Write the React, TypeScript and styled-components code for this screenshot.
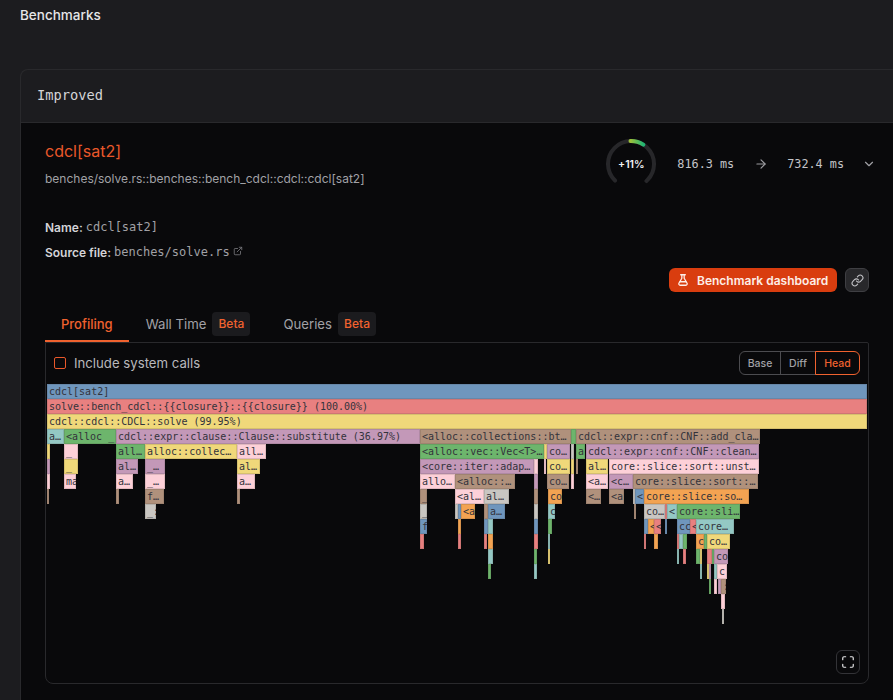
import React from "react";
import styled, { createGlobalStyle } from "styled-components";
import { ArrowRight, ChevronDown, ExternalLink, Link as LinkIcon, Maximize } from "lucide-react";

const GlobalStyle = createGlobalStyle`
  html, body {
    margin: 0;
    height: 700px;
    overflow: hidden;
    background: #1c1c1f;
    font-family: Inter, "Liberation Sans", sans-serif;
  }
  * { box-sizing: border-box; }
`;

const mono = `"DejaVu Sans Mono", "Liberation Mono", monospace`;

const tones = {
  blue: "#6f96bd",
  red: "#e88080",
  yellow: "#f0d87a",
  teal: "#94c8c4",
  green: "#6db56c",
  purple: "#c398b8",
  brown: "#b0917c",
  pink: "#fdd0d8",
  gray: "#c9c6c2",
  orange: "#f3a352",
};

type Tone = keyof typeof tones;
// [left, right, tone, label]
type FrameData = [number, number, Tone, string?];

const flameRows: FrameData[][] = [
  [[47, 867, "blue", "cdcl[sat2]"]],
  [[47, 867, "red", "solve::bench_cdcl::{{closure}}::{{closure}} (100.00%)"]],
  [[47, 867, "yellow", "cdcl::cdcl::CDCL::solve (99.95%)"]],
  [
    [47, 64, "teal", "a…"],
    [64, 116, "green", "<alloc _"],
    [116, 420, "purple", "cdcl::expr::clause::Clause::substitute (36.97%)"],
    [420, 571, "brown", "<alloc::collections::bt…"],
    [571, 576, "green"],
    [576, 760, "brown", "cdcl::expr::cnf::CNF::add_cla…"],
  ],
  [
    [47, 50, "yellow"],
    [64, 78, "pink", "_"],
    [116, 145, "green", "all…"],
    [145, 237, "yellow", "alloc::collec…"],
    [237, 266, "pink", "all…"],
    [420, 544, "green", "<alloc::vec::Vec<T>…"],
    [544, 547, "yellow"],
    [547, 570, "purple", "co…"],
    [571, 574, "gray"],
    [576, 585, "green", "a"],
    [586, 759, "purple", "cdcl::expr::cnf::CNF::clean…"],
  ],
  [
    [47, 50, "purple"],
    [64, 78, "yellow", "_"],
    [116, 138, "purple", "al…"],
    [145, 165, "purple", "_…"],
    [237, 260, "yellow", "al…"],
    [420, 534, "purple", "<core::iter::adap…"],
    [534, 538, "pink"],
    [544, 546, "pink"],
    [547, 570, "yellow", "co…"],
    [571, 574, "yellow"],
    [576, 578, "brown"],
    [586, 608, "yellow", "al…"],
    [609, 759, "pink", "core::slice::sort::unst…"],
  ],
  [
    [47, 50, "pink"],
    [64, 76, "pink", "ma"],
    [116, 133, "pink", "a…"],
    [145, 165, "pink", "_…"],
    [237, 255, "pink", "a…"],
    [420, 455, "pink", "allo…"],
    [455, 515, "brown", "<alloc::…"],
    [534, 538, "purple"],
    [547, 569, "brown", "co…"],
    [571, 574, "pink"],
    [586, 608, "pink", "<a…"],
    [609, 633, "purple", "<c…"],
    [633, 758, "brown", "core::slice::sort::…"],
  ],
  [
    [47, 49, "brown"],
    [116, 119, "brown"],
    [145, 164, "brown", "f…"],
    [237, 240, "brown"],
    [420, 427, "brown", "_"],
    [455, 484, "pink", "<al…"],
    [484, 509, "gray", "al…"],
    [534, 538, "brown"],
    [548, 562, "orange", "co"],
    [586, 601, "brown", "<…"],
    [609, 624, "brown", "<a"],
    [633, 635, "gray"],
    [635, 644, "blue", "<"],
    [644, 749, "orange", "core::slice::so…"],
  ],
  [
    [145, 156, "gray", "_:"],
    [420, 427, "gray", "_"],
    [455, 458, "gray"],
    [458, 461, "blue"],
    [461, 475, "orange", "<a"],
    [484, 488, "brown"],
    [488, 505, "blue", "a…"],
    [534, 538, "gray"],
    [548, 555, "teal", "c"],
    [634, 636, "brown"],
    [644, 665, "gray", "co…"],
    [665, 667, "red"],
    [667, 677, "teal", "<"],
    [677, 740, "green", "core::sli…"],
  ],
  [
    [420, 427, "blue", "f"],
    [458, 461, "orange"],
    [484, 488, "blue"],
    [488, 493, "teal"],
    [534, 538, "blue"],
    [548, 552, "green"],
    [644, 648, "blue"],
    [648, 654, "orange", "<"],
    [654, 661, "red", "<"],
    [665, 667, "blue"],
    [677, 690, "blue", "cc"],
    [690, 696, "red", "<"],
    [696, 734, "teal", "core…"],
  ],
  [
    [420, 424, "red"],
    [458, 461, "red"],
    [484, 487, "red"],
    [488, 493, "orange"],
    [534, 538, "red"],
    [548, 550, "teal"],
    [644, 646, "red"],
    [654, 658, "orange"],
    [677, 679, "red"],
    [679, 683, "teal"],
    [683, 687, "green"],
    [696, 704, "orange", "c"],
    [704, 707, "green"],
    [707, 730, "yellow", "co…"],
  ],
  [
    [488, 493, "teal"],
    [534, 537, "green"],
    [548, 550, "yellow"],
    [677, 679, "teal"],
    [683, 686, "red"],
    [696, 700, "green"],
    [700, 702, "yellow"],
    [707, 712, "red"],
    [712, 714, "green"],
    [714, 728, "purple", "co"],
  ],
  [
    [488, 491, "green"],
    [534, 537, "teal"],
    [700, 702, "teal"],
    [707, 709, "yellow"],
    [709, 711, "purple"],
    [714, 717, "teal"],
    [717, 727, "pink", "c"],
  ],
  [
    [709, 711, "green"],
    [714, 717, "pink"],
    [718, 721, "purple"],
    [721, 726, "brown", ":"],
  ],
  [[721, 725, "pink"]],
  [[722, 724, "gray"]],
];

const Heading = styled.h2`
  margin: 0;
  padding: 5px 20px 0;
  height: 69px;
  font-size: 13.5px;
  line-height: 20px;
  font-weight: 500;
  color: #e6e6e8;
`;

const Card = styled.section`
  margin-left: 20px;
  height: 631px;
  border: 1px solid #29292c;
  border-right: none;
  border-bottom: none;
  border-top-left-radius: 8px;
  display: flex;
  flex-direction: column;
`;

const CardHeader = styled.header`
  height: 53px;
  flex: none;
  display: flex;
  align-items: center;
  padding: 0 16px 2px;
  border-bottom: 1px solid #29292c;
  font-family: ${mono};
  font-size: 13.7px;
  color: #d4d4d8;
`;

const CardBody = styled.div`
  flex: 1;
  background: #09090b;
  padding: 15px 24px 0;
`;

const Summary = styled.div`
  display: flex;
  justify-content: space-between;
  align-items: center;
  height: 50px;
`;

const SummaryText = styled.div`
  margin-top: 2px;
`;

const Title = styled.div`
  font-size: 16px;
  line-height: 20px;
  color: #e9582a;
`;

const Subtitle = styled.div`
  margin-top: 10px;
  font-size: 12px;
  line-height: 16px;
  color: #a1a1a6;
`;

const Metrics = styled.div`
  display: flex;
  align-items: center;
  margin: 2px -7px 0 0;
  color: #c4c4c8;
`;

const Gauge = styled.div`
  position: relative;
  width: 50px;
  height: 50px;
  margin-right: 21px;
`;

const GaugeLabel = styled.span`
  position: absolute;
  inset: 0;
  display: flex;
  align-items: center;
  justify-content: center;
  font-size: 10.5px;
  font-weight: 600;
  color: #f4f4f5;
`;

const Time = styled.span`
  font-family: ${mono};
  font-size: 11.8px;
`;

const MetricArrow = styled(ArrowRight)`
  margin: 0 19px 0 20px;
  color: #9c9ca0;
`;

const MetricChevron = styled(ChevronDown)`
  margin-left: 18px;
  color: #a1a1a6;
`;

const MetaRow = styled.div<{ $first?: boolean }>`
  display: flex;
  align-items: center;
  height: 16px;
  margin-top: ${(p) => (p.$first ? "31px" : "9px")};
  font-size: 12px;
  font-weight: 600;
  color: #d4d4d8;
`;

const MetaValue = styled.span`
  margin-left: 3px;
  font-family: ${mono};
  font-weight: 400;
  color: #a1a1a6;
`;

const MetaLink = styled(ExternalLink)`
  margin-left: 3px;
  margin-top: -2px;
  color: #77777c;
`;

const Actions = styled.div`
  display: flex;
  justify-content: flex-end;
  align-items: center;
  gap: 8px;
  margin-top: 8px;
`;

const PrimaryButton = styled.button`
  display: flex;
  align-items: center;
  gap: 7px;
  width: 168px;
  height: 24px;
  padding: 0 0 0 7px;
  border: none;
  border-radius: 6px;
  background: #d93d0f;
  color: #fdeee8;
  font-family: inherit;
  font-size: 12px;
  font-weight: 600;
  white-space: nowrap;

  svg {
    flex: none;
  }
`;

const IconButton = styled.button`
  display: flex;
  align-items: center;
  justify-content: center;
  width: 24px;
  height: 24px;
  padding: 0;
  border: 1px solid #3f3f43;
  border-radius: 6px;
  background: #28282b;
  color: #c4c4c8;
`;

const Tabs = styled.nav`
  display: flex;
  gap: 1px;
  margin-top: 20px;
  height: 30px;
`;

const Tab = styled.div<{ $active?: boolean }>`
  display: flex;
  align-items: flex-start;
  gap: 6px;
  padding: 0 16px;
  height: 30px;
  line-height: 24px;
  font-size: ${(p) => (p.$active ? "13px" : "13.2px")};
  font-weight: ${(p) => (p.$active ? 500 : 400)};
  color: ${(p) => (p.$active ? "#f0622f" : "#a1a1a6")};
  border-bottom: 2px solid ${(p) => (p.$active ? "#f0622f" : "transparent")};
`;

const BetaBadge = styled.span`
  width: 38px;
  height: 24px;
  border-radius: 4px;
  background: #1b1b1e;
  color: #f0622f;
  text-align: center;
  font-size: 12px;
  font-weight: 500;
`;

const Panel = styled.div`
  position: relative;
  height: 342px;
  border: 1px solid #29292c;
  border-top-right-radius: 2px;
  border-bottom-left-radius: 8px;
  border-bottom-right-radius: 8px;
`;

const PanelBar = styled.div`
  display: flex;
  align-items: center;
  justify-content: space-between;
  height: 41px;
  padding: 8px 8px 9px;
`;

const CheckLabel = styled.label`
  display: flex;
  align-items: center;
  gap: 8px;
  font-size: 13.2px;
  color: #b8b8bc;
`;

const CheckBox = styled.span`
  width: 12px;
  height: 12px;
  border: 1px solid #e9582a;
  border-radius: 2px;
`;

const Segments = styled.div`
  display: flex;
  height: 24px;
`;

const Segment = styled.div<{ $active?: boolean; $width: number; $pos?: "start" | "end" }>`
  width: ${(p) => p.$width}px;
  display: flex;
  align-items: center;
  justify-content: center;
  font-size: 10.5px;
  font-weight: 500;
  color: ${(p) => (p.$active ? "#f0622f" : "#a1a1a6")};
  border: 1px solid ${(p) => (p.$active ? "#f0622f" : "#4c4c50")};
  margin-left: ${(p) => (p.$pos === "start" ? 0 : "-1px")};
  border-radius: ${(p) => (p.$pos === "start" ? "6px 0 0 6px" : p.$pos === "end" ? "0 6px 6px 0" : 0)};
`;

const Flame = styled.div`
  margin: 0 1px;
`;

const FlameRow = styled.div`
  position: relative;
  height: 15px;
`;

const Frame = styled.div<{ $tone: Tone }>`
  position: absolute;
  top: 0;
  height: 15px;
  overflow: hidden;
  white-space: pre;
  padding: 1px 0 0 2px;
  background: ${(p) => tones[p.$tone]};
  box-shadow: inset 0 0 0 1px rgba(60, 50, 40, 0.14);
  font-family: ${mono};
  font-size: 10px;
  line-height: 14px;
  color: #33333b;
`;

const ExpandButton = styled.button`
  position: absolute;
  right: 8px;
  bottom: 9px;
  display: flex;
  align-items: center;
  justify-content: center;
  width: 24px;
  height: 24px;
  padding: 0;
  background: transparent;
  border: 1px solid #333337;
  border-radius: 6px;
  color: #e8e8ea;
`;

const FLAME_LEFT = 47;

const FlaskIcon = () => (
  <svg width="14" height="14" viewBox="0 0 24 24" fill="none" stroke="currentColor" strokeWidth="2.2" strokeLinecap="round" strokeLinejoin="round">
    <path d="M8 3h8M10 3v6l-5 8.500A2.500 2.500 0 0 0 7 21h10a2.500 2.500 0 0 0 2-3.500L14 9V3" />
    <path d="M7 15h10" />
  </svg>
);

const ProgressGauge = () => {
  // open arc, the gap sits at the bottom
  const r = 23;
  const c = 2 * Math.PI * r;
  const track = c * 0.756;
  return (
    <Gauge>
      <svg width="50" height="50" viewBox="0 0 50 50">
        <defs>
          <linearGradient id="gaugeFill" x1="0" y1="0" x2="1" y2="0">
            <stop offset="0" stopColor="#9cc13c" />
            <stop offset="1" stopColor="#22b573" />
          </linearGradient>
        </defs>
        <circle
          cx="25"
          cy="25"
          r={r}
          fill="none"
          stroke="#27272a"
          strokeWidth="4"
          strokeLinecap="round"
          strokeDasharray={`${track} ${c}`}
          transform="rotate(134 25 25)"
        />
        <path d="M24.500 2A23 23 0 0 1 37.300 5.600" fill="none" stroke="url(#gaugeFill)" strokeWidth="4" strokeLinecap="round" />
      </svg>
      <GaugeLabel>+11%</GaugeLabel>
    </Gauge>
  );
};

const FlameGraph = () => (
  <Flame>
    {flameRows.map((frames, i) => (
      <FlameRow key={i}>
        {frames.map(([left, right, tone, label], j) => (
          <Frame key={j} $tone={tone} style={{ left: left - FLAME_LEFT, width: right - left }}>
            {label}
          </Frame>
        ))}
      </FlameRow>
    ))}
  </Flame>
);

export default function App() {
  return (
    <>
      <GlobalStyle />
      <Heading>Benchmarks</Heading>
      <Card>
        <CardHeader>Improved</CardHeader>
        <CardBody>
          <Summary>
            <SummaryText>
              <Title>cdcl[sat2]</Title>
              <Subtitle>benches/solve.rs::benches::bench_cdcl::cdcl::cdcl[sat2]</Subtitle>
            </SummaryText>
            <Metrics>
              <ProgressGauge />
              <Time>816.3 ms</Time>
              <MetricArrow size={14} />
              <Time>732.4 ms</Time>
              <MetricChevron size={14} />
            </Metrics>
          </Summary>
          <MetaRow $first>
            Name:<MetaValue>cdcl[sat2]</MetaValue>
          </MetaRow>
          <MetaRow>
            Source file:<MetaValue>benches/solve.rs</MetaValue>
            <MetaLink size={10} />
          </MetaRow>
          <Actions>
            <PrimaryButton>
              <FlaskIcon />
              Benchmark dashboard
            </PrimaryButton>
            <IconButton>
              <LinkIcon size={13} />
            </IconButton>
          </Actions>
          <Tabs>
            <Tab $active>Profiling</Tab>
            <Tab>
              Wall Time<BetaBadge>Beta</BetaBadge>
            </Tab>
            <Tab>
              Queries<BetaBadge>Beta</BetaBadge>
            </Tab>
          </Tabs>
          <Panel>
            <PanelBar>
              <CheckLabel>
                <CheckBox />
                Include system calls
              </CheckLabel>
              <Segments>
                <Segment $width={42} $pos="start">Base</Segment>
                <Segment $width={36}>Diff</Segment>
                <Segment $width={45} $pos="end" $active>Head</Segment>
              </Segments>
            </PanelBar>
            <FlameGraph />
            <ExpandButton>
              <Maximize size={14} />
            </ExpandButton>
          </Panel>
        </CardBody>
      </Card>
    </>
  );
}
